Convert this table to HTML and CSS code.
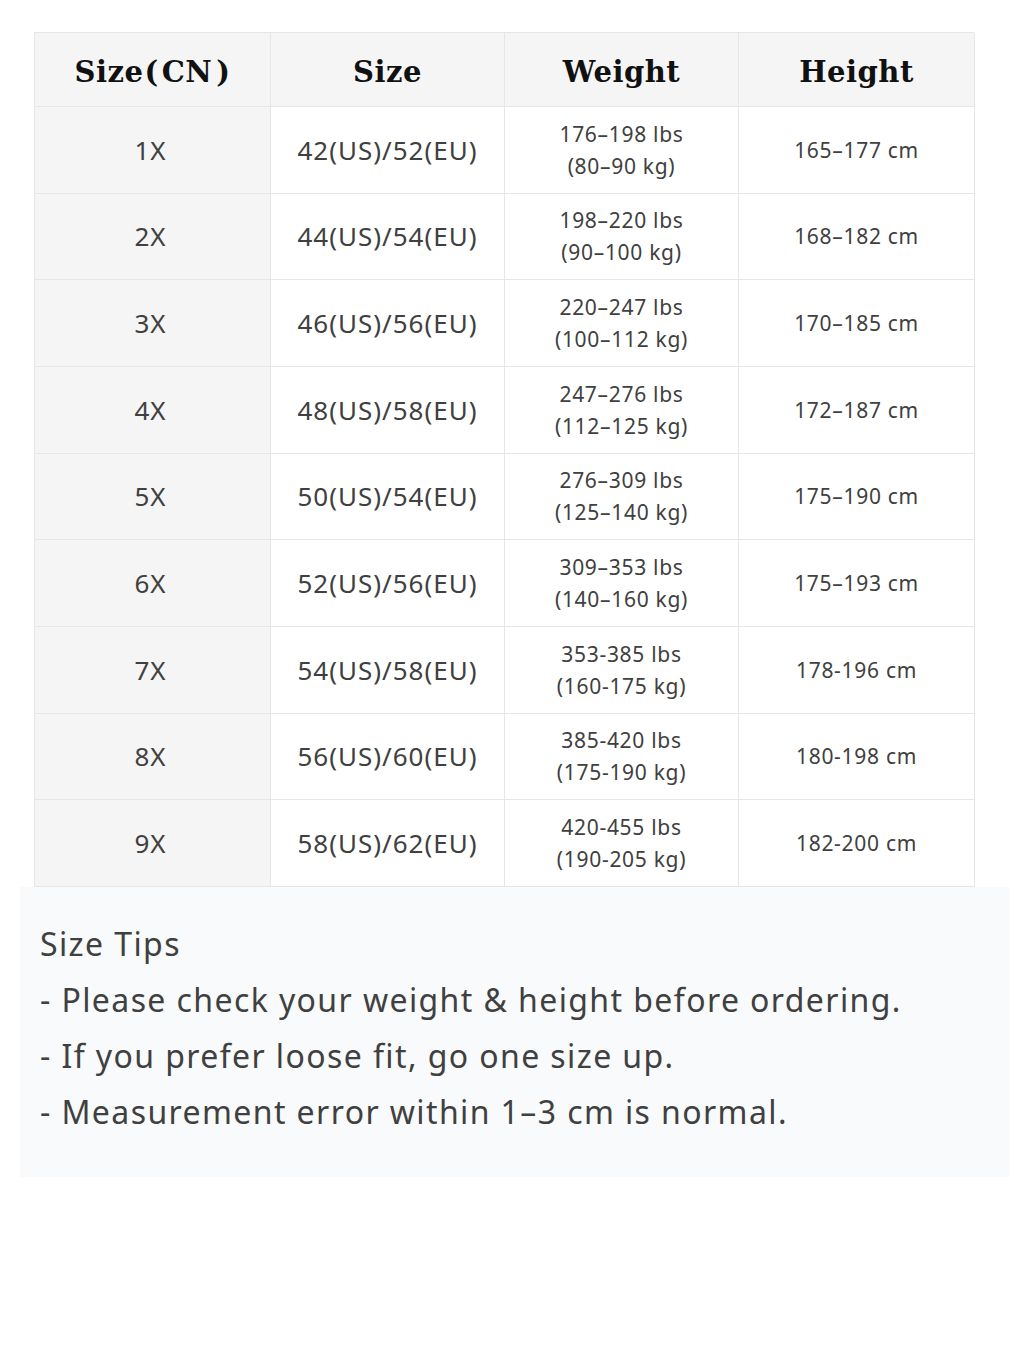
FILE: index.html
```html
<!DOCTYPE html>
<html>
<head>
<meta charset="utf-8">
<link rel="stylesheet" href="styles.css">
</head>
<body>
<div class="page">
  <div class="chart">
    <div class="cell head">Size<span class="paren">(</span>CN<span class="paren">)</span></div>
    <div class="cell head">Size</div>
    <div class="cell head">Weight</div>
    <div class="cell head">Height</div>

    <div class="cell label">1X</div><div class="cell big">42(US)/52(EU)</div><div class="cell small">176–198 lbs<br>(80–90 kg)</div><div class="cell small">165–177 cm</div>
    <div class="cell label">2X</div><div class="cell big">44(US)/54(EU)</div><div class="cell small">198–220 lbs<br>(90–100 kg)</div><div class="cell small">168–182 cm</div>
    <div class="cell label">3X</div><div class="cell big">46(US)/56(EU)</div><div class="cell small">220–247 lbs<br>(100–112 kg)</div><div class="cell small">170–185 cm</div>
    <div class="cell label">4X</div><div class="cell big">48(US)/58(EU)</div><div class="cell small">247–276 lbs<br>(112–125 kg)</div><div class="cell small">172–187 cm</div>
    <div class="cell label">5X</div><div class="cell big">50(US)/54(EU)</div><div class="cell small">276–309 lbs<br>(125–140 kg)</div><div class="cell small">175–190 cm</div>
    <div class="cell label">6X</div><div class="cell big">52(US)/56(EU)</div><div class="cell small">309–353 lbs<br>(140–160 kg)</div><div class="cell small">175–193 cm</div>
    <div class="cell label">7X</div><div class="cell big">54(US)/58(EU)</div><div class="cell small">353-385 lbs<br>(160-175 kg)</div><div class="cell small">178-196 cm</div>
    <div class="cell label">8X</div><div class="cell big">56(US)/60(EU)</div><div class="cell small">385-420 lbs<br>(175-190 kg)</div><div class="cell small">180-198 cm</div>
    <div class="cell label">9X</div><div class="cell big">58(US)/62(EU)</div><div class="cell small">420-455 lbs<br>(190-205 kg)</div><div class="cell small">182-200 cm</div>
  </div>
  <div class="tips">
    <p>Size Tips</p>
    <p>- Please check your weight &amp; height before ordering.</p>
    <p>- If you prefer loose fit, go one size up.</p>
    <p>- Measurement error within 1–3 cm is normal.</p>
  </div>
</div>
</body>
</html>
```

FILE: styles.css
```css
html, body {
  margin: 0;
  padding: 0;
  background: #ffffff;
}
.page {
  width: 1024px;
  height: 1365px;
  padding-top: 32px;
  box-sizing: border-box;
}
.chart {
  margin-left: 34px;
  width: 940px;
  display: grid;
  grid-template-columns: 236px 234px 234px 236px;
  grid-template-rows: 74px repeat(9, 86.67px);
  border-top: 1px solid #e6e6e6;
  border-left: 1px solid #e6e6e6;
  box-sizing: border-box;
}
.cell {
  border-right: 1px solid #e6e6e6;
  border-bottom: 1px solid #e6e6e6;
  display: flex;
  align-items: center;
  justify-content: center;
  text-align: center;
  color: #404040;
  font-family: "Noto Sans", "Open Sans", sans-serif;
  background: #ffffff;
}
.head {
  background: #f5f5f5;
  font-family: "DejaVu Serif", "Liberation Serif", serif;
  font-weight: bold;
  font-size: 29px;
  color: #111111;
  letter-spacing: 0.5px;
  padding-top: 4px;
  box-sizing: border-box;
}
.paren {
  margin: 0 3px 0 1px;
}
.paren + .paren {
  margin: 0 0 0 4px;
}
.label {
  background: #f5f5f5;
  font-size: 26px;
  letter-spacing: 1px;
  padding-right: 4px;
  box-sizing: border-box;
}
.big {
  font-size: 26px;
  letter-spacing: 1px;
}
.small {
  font-size: 21px;
  letter-spacing: 0.7px;
  line-height: 32px;
}
.tips {
  margin-left: 20px;
  width: 990px;
  height: 290px;
  background: #f9fafb;
  padding: 29px 0 0 20px;
  box-sizing: border-box;
  font-family: "Noto Sans", "Open Sans", sans-serif;
  font-size: 32px;
  letter-spacing: 1.4px;
  color: #404040;
}
.tips p {
  margin: 0;
  line-height: 56px;
}
```
